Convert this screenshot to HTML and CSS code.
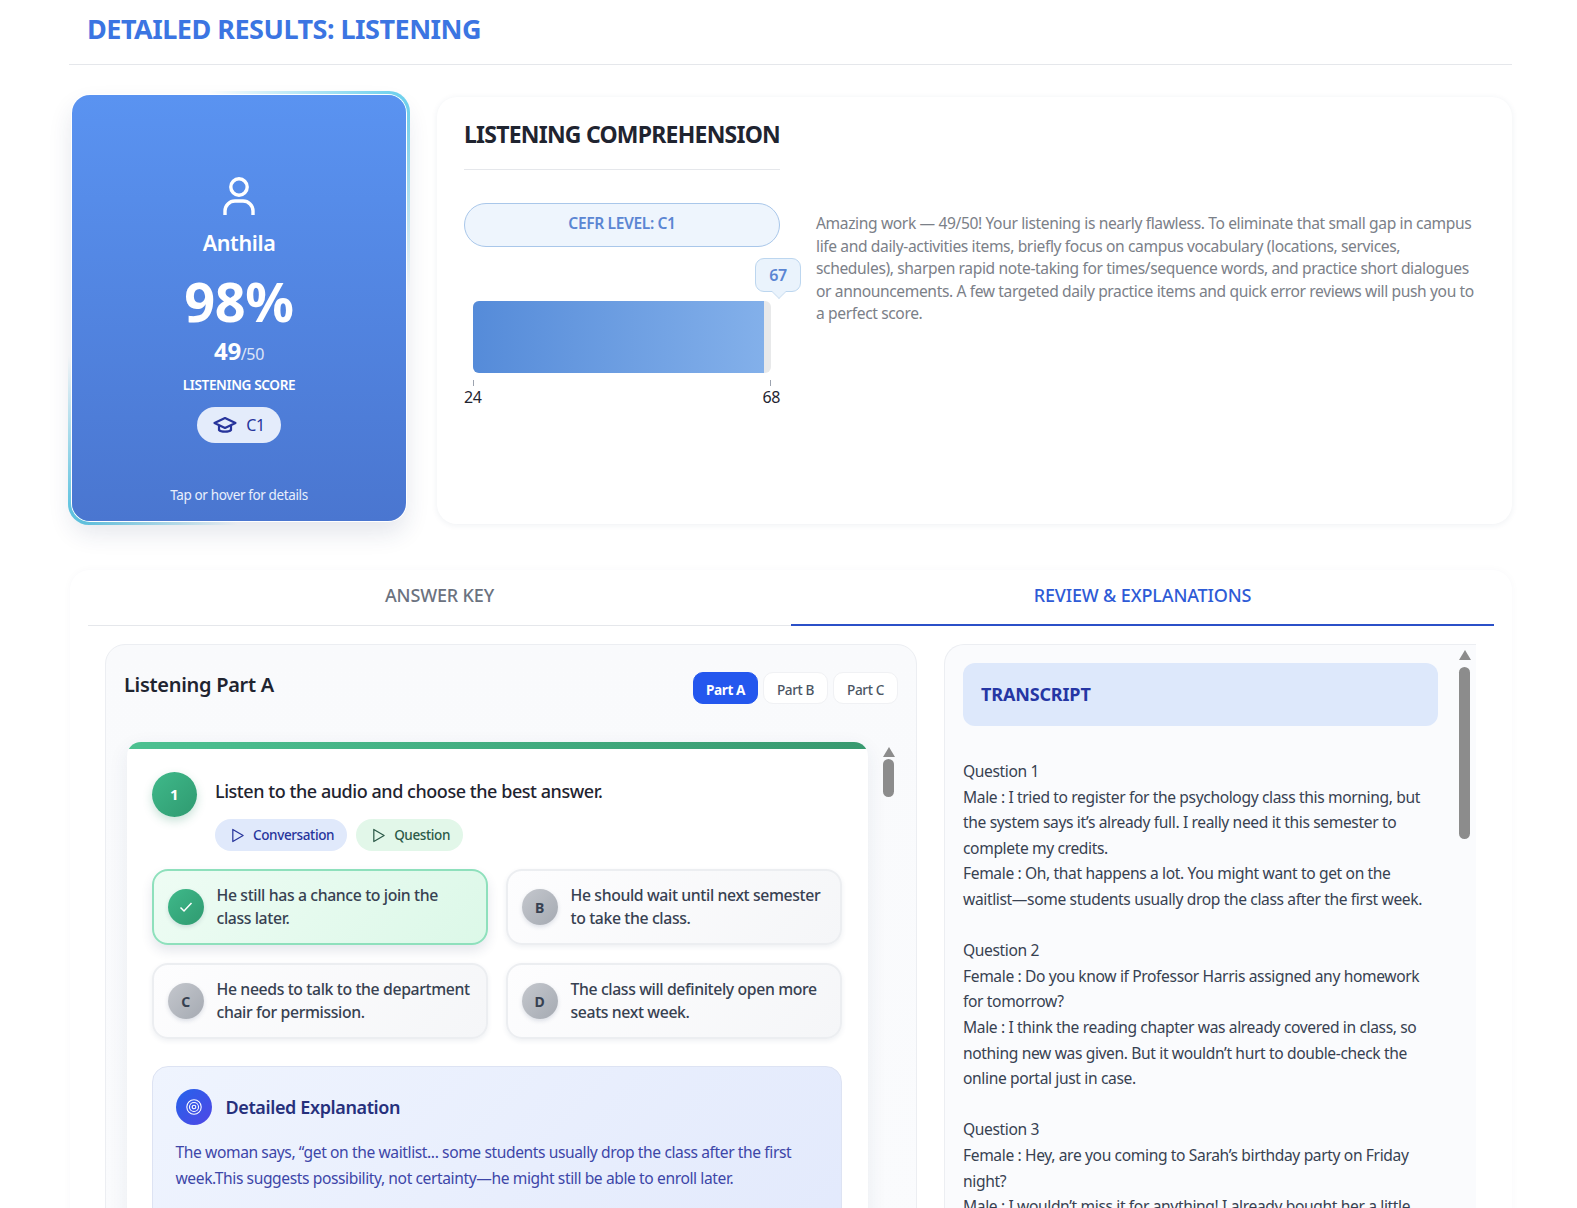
FILE: index.html
```html
<!DOCTYPE html>
<html lang="en">
<head>
    <meta charset="UTF-8">
    <meta name="viewport" content="width=device-width, initial-scale=1.0">
    <title>Detailed Results: Listening</title>
    <link rel="stylesheet" href="styles.css">
</head>
<body>
<div class="page">
    <header class="page-head">
        <h1>DETAILED RESULTS: LISTENING</h1>
    </header>

    <section class="top-row">
        <div class="score-wrap">
            <div class="score-card">
                <svg class="user-icon" viewBox="0 0 32 40" fill="none" stroke="#fff" stroke-width="3.400">
                    <circle cx="16" cy="10" r="8.200"/>
                    <path d="M2 38v-4a10 10 0 0 1 10-10h8a10 10 0 0 1 10 10v4"/>
                </svg>
                <div class="score-name">Anthila</div>
                <div class="score-pct">98%</div>
                <div class="score-raw"><b>49</b><span>/50</span></div>
                <div class="score-label">LISTENING SCORE</div>
                <div class="level-pill">
                    <svg viewBox="0 0 24 24" fill="none" stroke="#27349b" stroke-width="2.200" stroke-linejoin="round">
                        <path d="M12 5 1.500 10 12 15l10.500-5z"/>
                        <path d="M6 12.500v4.500c2 2.200 10 2.200 12 0v-4.500"/>
                    </svg>
                    <span>C1</span>
                </div>
                <div class="score-hint">Tap or hover for details</div>
            </div>
        </div>

        <div class="info-card">
            <div class="info-left">
                <h2>LISTENING COMPREHENSION</h2>
                <div class="cefr-pill">CEFR LEVEL: C1</div>
                <div class="bubble-row"><span class="bubble">67</span></div>
                <div class="bar"><div class="bar-fill"></div></div>
                <div class="bar-scale">
                    <span class="tick"><i></i>24</span>
                    <span class="tick"><i></i>68</span>
                </div>
            </div>
            <p class="feedback">Amazing work — 49/50! Your listening is nearly flawless. To eliminate that small gap in campus life and daily-activities items, briefly focus on campus vocabulary (locations, services, schedules), sharpen rapid note-taking for times/sequence words, and practice short dialogues or announcements. A few targeted daily practice items and quick error reviews will push you to a perfect score.</p>
        </div>
    </section>

    <section class="review">
        <div class="tabs">
            <div class="tab">ANSWER KEY</div>
            <div class="tab active">REVIEW &amp; EXPLANATIONS</div>
        </div>

        <div class="columns">
            <div class="part-panel">
                <div class="part-head">
                    <h3>Listening Part A</h3>
                    <div class="part-btns">
                        <span class="part-btn on">Part A</span>
                        <span class="part-btn">Part B</span>
                        <span class="part-btn">Part C</span>
                    </div>
                </div>

                <div class="part-body">
                    <div class="q-card">
                        <div class="q-head">
                            <div class="q-num">1</div>
                            <div>
                                <div class="q-text">Listen to the audio and choose the best answer.</div>
                                <div class="audio-row">
                                    <span class="audio blue">
                                        <svg viewBox="0 0 16 16" fill="none" stroke="currentColor" stroke-width="1.300" stroke-linejoin="round"><path d="M3 1.500v13l11-6.500z"/></svg>
                                        Conversation
                                    </span>
                                    <span class="audio green">
                                        <svg viewBox="0 0 16 16" fill="none" stroke="currentColor" stroke-width="1.300" stroke-linejoin="round"><path d="M3 1.500v13l11-6.500z"/></svg>
                                        Question
                                    </span>
                                </div>
                            </div>
                        </div>

                        <div class="options">
                            <div class="option correct">
                                <span class="opt-mark">
                                    <svg viewBox="0 0 16 16" width="16" height="16" fill="none" stroke="#fff" stroke-width="1.500"><path d="M2.500 8.500 6 12l7.500-8"/></svg>
                                </span>
                                <span>He still has a chance to join the class later.</span>
                            </div>
                            <div class="option">
                                <span class="opt-mark">B</span>
                                <span>He should wait until next semester to take the class.</span>
                            </div>
                            <div class="option">
                                <span class="opt-mark">C</span>
                                <span>He needs to talk to the department chair for permission.</span>
                            </div>
                            <div class="option">
                                <span class="opt-mark">D</span>
                                <span>The class will definitely open more seats next week.</span>
                            </div>
                        </div>

                        <div class="explain">
                            <div class="explain-head">
                                <span class="explain-icon">
                                    <svg viewBox="0 0 20 20" width="18" height="18" fill="none" stroke="#fff" stroke-width="1.200">
                                        <circle cx="10" cy="10" r="8"/>
                                        <circle cx="10" cy="10" r="5"/>
                                        <circle cx="10" cy="10" r="2"/>
                                    </svg>
                                </span>
                                <h4>Detailed Explanation</h4>
                            </div>
                            <p>The woman says, “get on the waitlist... some students usually drop the class after the first week.This suggests possibility, not certainty—he might still be able to enroll later.</p>
                        </div>
                    </div>
                    <div class="scrollbar small"><i class="arrow"></i><i class="thumb"></i></div>
                </div>
            </div>

            <div class="script-panel">
                <div class="script-body">
                    <div class="script-title">TRANSCRIPT</div>
                    <p>Question 1<br>Male : I tried to register for the psychology class this morning, but the system says it’s already full. I really need it this semester to complete my credits.<br>Female : Oh, that happens a lot. You might want to get on the waitlist—some students usually drop the class after the first week.</p>
                    <p>Question 2<br>Female : Do you know if Professor Harris assigned any homework for tomorrow?<br>Male : I think the reading chapter was already covered in class, so nothing new was given. But it wouldn’t hurt to double-check the online portal just in case.</p>
                    <p>Question 3<br>Female : Hey, are you coming to Sarah’s birthday party on Friday night?<br>Male : I wouldn’t miss it for anything! I already bought her a little</p>
                </div>
                <div class="scrollbar big"><i class="arrow"></i><i class="thumb"></i></div>
            </div>
        </div>
    </section>
</div>
</body>
</html>
```
FILE: styles.css
```css
* {
    box-sizing: border-box;
}

html, body {
    margin: 0;
    height: 1208px;
    overflow: hidden;
    background: #fff;
}

body {
    font-family: "Noto Sans", Arial, sans-serif;
    font-size: 15.600px;
    letter-spacing: -0.380px;
    color: #1f2937;
}

.page {
    padding: 0 65px 0 69px;
    height: 1208px;
    overflow: hidden;
}

/* header */
.page-head {
    height: 65px;
    padding: 0 0 8px 18px;
    border-bottom: 1px solid #e5e7eb;
    display: flex;
    align-items: center;
}

.page-head h1 {
    margin: 0;
    font-size: 27px;
    font-weight: 700;
    letter-spacing: -0.500px;
    color: #3b75e2;
}

/* top row */
.top-row {
    display: flex;
    gap: 31px;
    margin-top: 30px;
}

.score-wrap {
    margin-left: 3px;
    width: 334px;
    height: 426px;
    position: relative;
    flex: none;
}

.score-wrap::before {
    content: "";
    position: absolute;
    inset: -4px;
    border-radius: 21px;
    background: linear-gradient(45deg, #54c6e4 0%, rgba(84, 198, 228, 0) 22%, rgba(84, 198, 228, 0) 74%, #66d0ee 100%);
}

.score-card {
    position: relative;
    height: 100%;
    border-radius: 18px;
    background: linear-gradient(180deg, #5a93f1 0%, #4a76d0 100%);
    box-shadow: 0 0 0 1px #fff, 0 12px 24px rgba(30, 50, 100, 0.12);
    color: #fff;
    display: flex;
    flex-direction: column;
    align-items: center;
    padding-top: 82px;
}

.user-icon {
    width: 32px;
    height: 40px;
}

.score-name {
    font-size: 21.500px;
    font-weight: 600;
    margin-top: 11px;
    line-height: 30px;
}

.score-pct {
    font-size: 54px;
    font-weight: 700;
    line-height: 60px;
    margin-top: 13px;
}

.score-raw {
    margin-top: 4px;
    line-height: 32px;
}

.score-raw b {
    font-size: 24px;
}

.score-raw span {
    font-size: 16px;
    opacity: 0.8;
}

.score-label {
    font-size: 13.600px;
    font-weight: 600;
    margin-top: 5px;
    line-height: 20px;
}

.level-pill {
    margin-top: 12px;
    width: 84px;
    height: 36px;
    border-radius: 18px;
    background: #e4ecfb;
    color: #27349b;
    font-size: 16px;
    display: flex;
    align-items: center;
    justify-content: center;
    gap: 9px;
}

.level-pill svg {
    width: 24px;
    height: 24px;
}

.score-hint {
    margin-top: auto;
    margin-bottom: 17px;
    font-size: 13.500px;
    color: #e8effc;
}

/* comprehension card */
.info-card {
    flex: 1;
    height: 427px;
    margin-top: 2px;
    border-radius: 20px;
    background: #fff;
    box-shadow: 0 1px 6px rgba(40, 60, 100, 0.08);
    padding: 0 33px 0 27px;
    display: flex;
    gap: 36px;
}

.info-left {
    width: 316px;
    flex: none;
}

.info-left h2 {
    margin: 0;
    height: 73px;
    padding-top: 21px;
    font-size: 23px;
    line-height: 33px;
    font-weight: 700;
    letter-spacing: -0.770px;
    white-space: nowrap;
    color: #1f2430;
    border-bottom: 1px solid #e5e7eb;
}

.cefr-pill {
    margin-top: 33px;
    height: 44px;
    border-radius: 22px;
    border: 1px solid #a9c7ea;
    background: #eef5fd;
    color: #5b86d3;
    font-size: 15.600px;
    font-weight: 600;
    text-align: center;
    line-height: 38px;
}

.bubble-row {
    margin-top: 11px;
    display: flex;
    justify-content: flex-end;
    margin-right: -21px;
}

.bubble {
    position: relative;
    width: 46px;
    height: 34px;
    border-radius: 9px;
    border: 1px solid #bcd6ef;
    background: #eaf3fc;
    color: #5b86d3;
    font-size: 16px;
    font-weight: 600;
    text-align: center;
    line-height: 32px;
}

.bubble::after {
    content: "";
    position: absolute;
    left: 18px;
    bottom: -6px;
    width: 9px;
    height: 9px;
    background: #eaf3fc;
    border-right: 1px solid #d5e4f3;
    border-bottom: 1px solid #d5e4f3;
    transform: rotate(45deg);
}

.bar {
    margin: 9px 9px 0;
    height: 72px;
    border-radius: 6px;
    background: #e8e9ea;
    overflow: hidden;
}

.bar-fill {
    width: 291px;
    height: 100%;
    background: linear-gradient(90deg, #558bd9 0%, #83b0ea 100%);
}

.bar-scale {
    display: flex;
    justify-content: space-between;
    font-size: 16px;
    color: #1f2430;
    padding: 7px 0 0;
}

.tick {
    position: relative;
    padding-top: 6px;
    line-height: 22px;
}

.tick i {
    position: absolute;
    top: 0;
    height: 6px;
    width: 1px;
    background: #9ca3af;
}

.tick:first-child i {
    left: 9px;
}

.tick:last-child i {
    right: 9px;
}

.feedback {
    margin: 115px 0 0;
    line-height: 22.500px;
    color: #7b8088;
}

/* review section */
.review {
    margin-top: 46px;
    height: 700px;
    margin-left: 1px;
    padding: 0 18px;
    border-radius: 20px 20px 0 0;
    background: #fff;
    box-shadow: 0 0 8px rgba(40, 60, 100, 0.03);
}

.tabs {
    display: flex;
    height: 56px;
    border-bottom: 1px solid #e5e7eb;
}

.tab {
    flex: 1;
    text-align: center;
    padding-top: 10px;
    line-height: 30px;
    font-size: 18px;
    font-weight: 500;
    letter-spacing: -0.150px;
    color: #6b7280;
}

.tab.active {
    color: #2e5bd6;
    border-bottom: 2px solid #2b50c8;
    height: 56px;
}

.columns {
    display: flex;
    gap: 27px;
    padding: 18px 0 0 17px;
}

.part-panel {
    width: 812px;
    height: 640px;
    flex: none;
    border: 1px solid #eceef2;
    border-radius: 20px;
    background: linear-gradient(180deg, #f9fafc, #fafbfd);
    padding: 27px 18px 0 18px;
}

.part-head {
    display: flex;
    justify-content: space-between;
    height: 70px;
}

.part-head h3 {
    margin: 0;
    font-size: 20px;
    line-height: 26px;
    font-weight: 600;
    letter-spacing: -0.300px;
    color: #1f2430;
}

.part-btns {
    display: flex;
    gap: 5px;
}

.part-btn {
    width: 65px;
    height: 32px;
    border-radius: 10px;
    background: #fff;
    border: 1px solid #f0f1f4;
    font-size: 13.600px;
    line-height: 33px;
    text-align: center;
    color: #4b5563;
    font-weight: 500;
}

.part-btn.on {
    background: #2457ee;
    border-color: #2457ee;
    color: #fff;
    font-weight: 700;
}

.part-body {
    display: flex;
    padding-left: 3px;
}

.q-card {
    width: 741px;
    height: 560px;
    flex: none;
    border-radius: 14px 14px 0 0;
    background: linear-gradient(90deg, #4cc191, #38996f) top / 100% 7px no-repeat, #fff;
    box-shadow: 0 6px 20px rgba(40, 60, 100, 0.08);
    padding: 30px 26px 0 24.500px;
}

.q-head {
    display: flex;
    gap: 18.500px;
}

.q-num {
    width: 45px;
    height: 45px;
    flex: none;
    border-radius: 50%;
    background: linear-gradient(135deg, #3fb98a, #2f9a70);
    box-shadow: 0 4px 10px rgba(40, 140, 100, 0.25);
    color: #fff;
    font-size: 15px;
    font-weight: 700;
    text-align: center;
    line-height: 45px;
}

.q-text {
    font-size: 18px;
    font-weight: 500;
    letter-spacing: -0.450px;
    line-height: 26px;
    margin-top: 6px;
    color: #1f2430;
}

.audio-row {
    display: flex;
    gap: 9px;
    margin-top: 15px;
}

.audio {
    display: flex;
    align-items: center;
    gap: 8px;
    height: 32px;
    padding: 0 13px 0 15px;
    border-radius: 16px;
    font-size: 13.500px;
    font-weight: 500;
}

.audio svg {
    width: 15px;
    height: 15px;
}

.audio.blue {
    background: #e0e9fb;
    color: #27349b;
}

.audio.green {
    background: #e2f7e9;
    color: #2c5a48;
}

.options {
    display: grid;
    grid-template-columns: 336.500px 336.500px;
    gap: 18px 17.500px;
    margin-top: 18px;
}

.option {
    height: 76px;
    padding: 0 15px 0 14px;
    display: flex;
    align-items: center;
    gap: 13px;
    border: 2px solid #eceef1;
    border-radius: 16px;
    background: linear-gradient(135deg, #fdfdfe, #f5f6f8);
    box-shadow: 0 2px 5px rgba(40, 60, 100, 0.08);
    font-size: 15.800px;
    font-weight: 500;
    line-height: 23px;
    color: #374151;
}

.option.correct {
    border-color: #8ee0bc;
    background: linear-gradient(135deg, #eefcf4, #dcf8e8);
    box-shadow: 0 6px 12px rgba(40, 60, 100, 0.12);
}

.opt-mark {
    width: 36px;
    height: 36px;
    flex: none;
    border-radius: 50%;
    background: linear-gradient(135deg, #c4c7cd, #a5aab2);
    box-shadow: 0 2px 4px rgba(40, 60, 100, 0.15);
    display: flex;
    align-items: center;
    justify-content: center;
    font-size: 14px;
    font-weight: 700;
    color: #374151;
}

.correct .opt-mark {
    background: linear-gradient(135deg, #3fb98a, #2f9a70);
}

.explain {
    margin-top: 27px;
    height: 200px;
    border: 1px solid #dde3f3;
    border-radius: 16px;
    background: linear-gradient(135deg, #eff4fe, #e2e9fc);
    padding: 22px 23px;
}

.explain-head {
    display: flex;
    align-items: center;
    gap: 14px;
}

.explain-icon {
    width: 36px;
    height: 36px;
    border-radius: 50%;
    background: linear-gradient(135deg, #2563eb, #5046e5);
    display: flex;
    align-items: center;
    justify-content: center;
}

.explain h4 {
    margin: 0;
    font-size: 18px;
    font-weight: 600;
    color: #26307c;
}

.explain p {
    margin: 14px 0 0;
    line-height: 26px;
    letter-spacing: -0.400px;
    color: #3d46a8;
}

/* fake scrollbars */
.scrollbar {
    flex: none;
    display: flex;
    flex-direction: column;
    align-items: center;
}

.scrollbar .arrow {
    width: 0;
    height: 0;
    border-left: 6px solid transparent;
    border-right: 6px solid transparent;
    border-bottom: 10px solid #8c8c8c;
}

.scrollbar .thumb {
    width: 11px;
    border-radius: 6px;
    background: #8c8c8c;
}

.scrollbar.small {
    margin-left: 14.500px;
    padding-top: 5px;
}

.scrollbar.small .thumb {
    height: 38px;
    margin-top: 2px;
}

.scrollbar.big {
    margin-left: 20.500px;
    padding-top: 5px;
}

.scrollbar.big .thumb {
    height: 172px;
    margin-top: 7px;
}

.script-panel {
    flex: 1;
    height: 640px;
    display: flex;
    border: 1px solid #eceef2;
    border-right: 0;
    border-bottom: 0;
    border-radius: 20px 0 0 0;
    background: #fafbfd;
    margin-right: 18px;
}

.script-body {
    width: 493px;
    flex: none;
    padding: 18px 0 0 18px;
    line-height: 25.600px;
    letter-spacing: -0.370px;
    color: #374151;
}

.script-title {
    height: 63px;
    border-radius: 12px;
    background: #dde8fb;
    padding-left: 18px;
    font-size: 18px;
    font-weight: 700;
    letter-spacing: -0.150px;
    color: #2536a4;
    line-height: 63px;
    margin-bottom: 33px;
}

.script-body p {
    margin: 0 0 25.600px;
}
```
